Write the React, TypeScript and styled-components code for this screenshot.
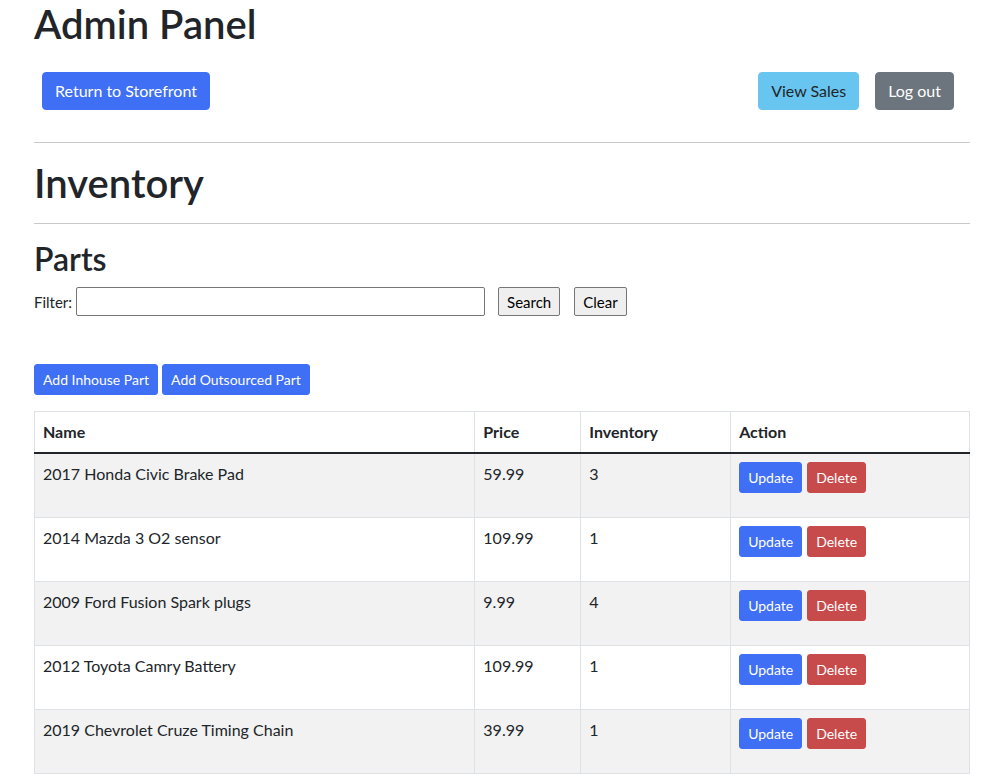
import React from "react";
import styled, { createGlobalStyle, css } from "styled-components";

const Global = createGlobalStyle`
  * { box-sizing: border-box; }
  body {
    margin: 0;
    font-family: Lato, "Noto Sans", "Liberation Sans", sans-serif;
    font-size: 16px;
    line-height: 1.5;
    color: #212529;
    background: #fff;
  }
`;

const Container = styled.div`
  width: 960px;
  margin: 0 auto;
  padding: 0 12px;
`;

const H1 = styled.h1`
  margin: 0 0 8px;
  font-size: 40px;
  font-weight: 600;
  line-height: 1.2;
`;

const H2 = styled.h2`
  margin: 0 0 8px;
  font-size: 32px;
  font-weight: 600;
  line-height: 1.2;
`;

const Rule = styled.hr`
  margin: 16px 0;
  border: 0;
  border-top: 1px solid #c8c9ca;
  height: 0;
`;

const TopBar = styled.div`
  display: flex;
  justify-content: space-between;
  align-items: center;
  padding: 8px 0;
`;

const Group = styled.div`
  display: flex;
  padding-right: 8px;
`;

type Variant = "primary" | "info" | "secondary" | "danger";
const colors: Record<Variant, { bg: string; fg: string }> = {
  primary: { bg: "#3e6ff5", fg: "#fff" },
  info: { bg: "#68c5ef", fg: "#212529" },
  secondary: { bg: "#6c757d", fg: "#fff" },
  danger: { bg: "#c84b4b", fg: "#fff" },
};

const Btn = styled.button<{ $v: Variant; $sm?: boolean; $m?: number }>`
  font-family: inherit;
  border: 1px solid ${(p) => colors[p.$v].bg};
  background: ${(p) => colors[p.$v].bg};
  color: ${(p) => colors[p.$v].fg};
  border-radius: ${(p) => (p.$sm ? 3 : 4)}px;
  margin: ${(p) => p.$m ?? 0}px;
  cursor: pointer;
  ${(p) =>
    p.$sm
      ? css`
          font-size: 14px;
          line-height: 21px;
          padding: 4px 8px;
        `
      : css`
          font-size: 16px;
          line-height: 24px;
          padding: 6px 12px;
        `}
`;

const FilterRow = styled.form`
  display: flex;
  align-items: center;
  font-size: 15px;
  margin: 0;
  padding-top: 1px;
`;

const Label = styled.label`
  margin-right: 4px;
`;

const Input = styled.input`
  width: 409px;
  height: 29px;
  border: 1px solid #767676;
  border-radius: 2px;
  font: inherit;
  padding: 1px 2px;
`;

const PlainBtn = styled.button<{ $ml: number }>`
  height: 29px;
  margin-left: ${(p) => p.$ml}px;
  border: 1px solid #767676;
  border-radius: 2px;
  background: #efefef;
  font-family: inherit;
  font-size: 15px;
  color: #000;
  padding: 1px 8px;
`;

const AddRow = styled.div`
  display: flex;
  gap: 4px;
  margin: 48px 0 16px;
`;

const Table = styled.table`
  width: 936px;
  border-collapse: collapse;
  border: 1px solid #dee2e6;
  margin-bottom: 16px;
`;

const Th = styled.th<{ $w: number }>`
  width: ${(p) => p.$w}px;
  text-align: left;
  font-weight: 700;
  padding: 8px;
  border: 1px solid #dee2e6;
  border-bottom: 2px solid #212529;
  vertical-align: bottom;
`;

const Tr = styled.tr<{ $odd: boolean }>`
  background: ${(p) => (p.$odd ? "#f2f2f2" : "#fff")};
`;

const Td = styled.td`
  padding: 8px;
  border: 1px solid #dee2e6;
  vertical-align: top;
`;

const Actions = styled.div`
  display: flex;
  gap: 5px;
  margin-bottom: 16px;
`;

const parts = [
  { name: "2017 Honda Civic Brake Pad", price: "59.99", inv: 3 },
  { name: "2014 Mazda 3 O2 sensor", price: "109.99", inv: 1 },
  { name: "2009 Ford Fusion Spark plugs", price: "9.99", inv: 4 },
  { name: "2012 Toyota Camry Battery", price: "109.99", inv: 1 },
  { name: "2019 Chevrolet Cruze Timing Chain", price: "39.99", inv: 1 },
];

export default function App() {
  return (
    <>
      <Global />
      <Container>
        <H1>Admin Panel</H1>
        <TopBar>
          <Btn $v="primary" $m={8}>Return to Storefront</Btn>
          <Group>
            <Btn $v="info" $m={8}>View Sales</Btn>
            <Btn $v="secondary" $m={8}>Log out</Btn>
          </Group>
        </TopBar>
        <Rule />
        <H1>Inventory</H1>
        <Rule />
        <H2>Parts</H2>
        <FilterRow onSubmit={(e) => e.preventDefault()}>
          <Label htmlFor="filter">Filter:</Label>
          <Input id="filter" type="text" />
          <PlainBtn $ml={13} type="submit">Search</PlainBtn>
          <PlainBtn $ml={14} type="button">Clear</PlainBtn>
        </FilterRow>
        <AddRow>
          <Btn $v="primary" $sm>Add Inhouse Part</Btn>
          <Btn $v="primary" $sm>Add Outsourced Part</Btn>
        </AddRow>
        <Table>
          <thead>
            <tr>
              <Th $w={441}>Name</Th>
              <Th $w={106}>Price</Th>
              <Th $w={150}>Inventory</Th>
              <Th $w={239}>Action</Th>
            </tr>
          </thead>
          <tbody>
            {parts.map((p, i) => (
              <Tr key={p.name} $odd={i % 2 === 0}>
                <Td>{p.name}</Td>
                <Td>{p.price}</Td>
                <Td>{p.inv}</Td>
                <Td>
                  <Actions>
                    <Btn $v="primary" $sm>Update</Btn>
                    <Btn $v="danger" $sm>Delete</Btn>
                  </Actions>
                </Td>
              </Tr>
            ))}
          </tbody>
        </Table>
      </Container>
    </>
  );
}
